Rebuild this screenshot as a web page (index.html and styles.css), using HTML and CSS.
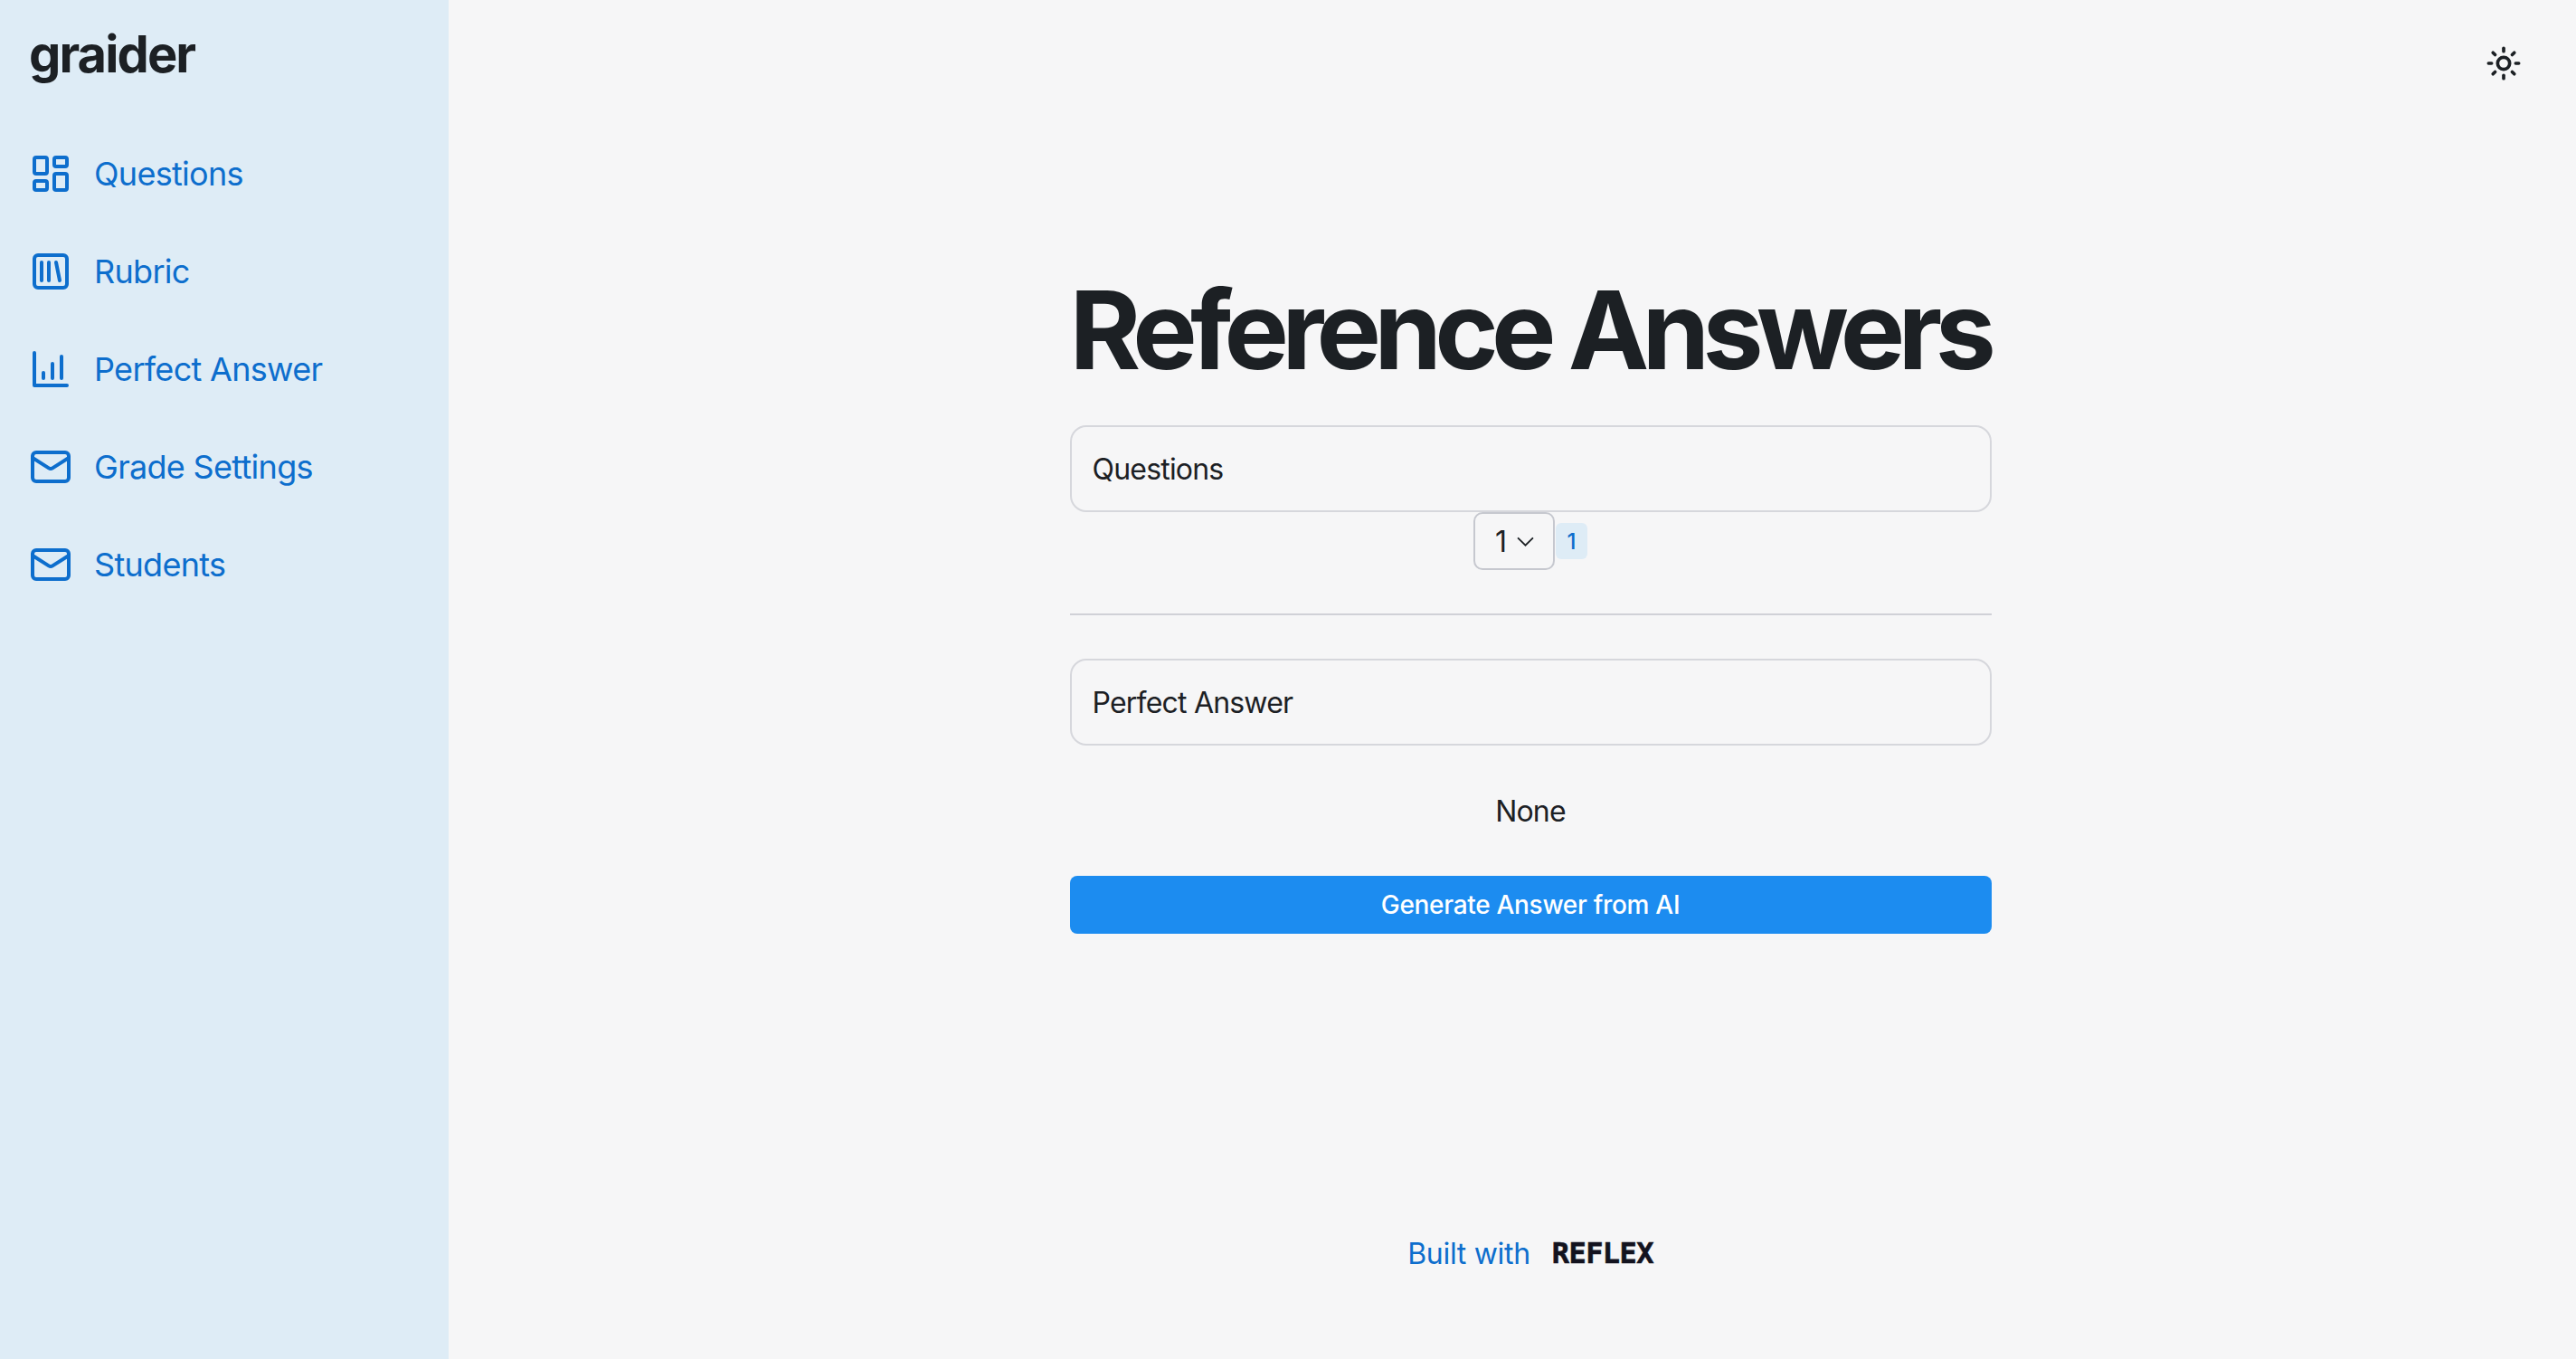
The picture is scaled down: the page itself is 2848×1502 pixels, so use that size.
FILE: index.html
```html
<!DOCTYPE html>
<html lang="en">
<head>
    <meta charset="UTF-8">
    <meta name="viewport" content="width=device-width, initial-scale=1.0">
    <title>graider</title>
    <link rel="stylesheet" href="styles.css">
</head>
<body>
    <div class="app">
        <aside class="sidebar">
            <div class="logo">graider</div>
            <nav class="nav">
                <a class="nav-item" href="#">
                    <svg class="nav-icon" viewBox="0 0 24 24"><rect x="3" y="3" width="7" height="9" rx="1"/><rect x="14" y="3" width="7" height="5" rx="1"/><rect x="14" y="12" width="7" height="9" rx="1"/><rect x="3" y="16" width="7" height="5" rx="1"/></svg>
                    <span>Questions</span>
                </a>
                <a class="nav-item" href="#">
                    <svg class="nav-icon" viewBox="0 0 24 24"><rect x="3" y="3" width="18" height="18" rx="2"/><path d="M7 7v10"/><path d="M11 7v10"/><path d="m15 7 2 10"/></svg>
                    <span>Rubric</span>
                </a>
                <a class="nav-item" href="#">
                    <svg class="nav-icon" viewBox="0 0 24 24"><path d="M3 3v18h18"/><path d="M13 17V9"/><path d="M18 17V5"/><path d="M8 17v-3"/></svg>
                    <span>Perfect Answer</span>
                </a>
                <a class="nav-item" href="#">
                    <svg class="nav-icon" viewBox="0 0 24 24"><rect x="2" y="4" width="20" height="16" rx="2"/><path d="m22 7-8.97 5.7a1.94 1.94 0 0 1-2.06 0L2 7"/></svg>
                    <span>Grade Settings</span>
                </a>
                <a class="nav-item" href="#">
                    <svg class="nav-icon" viewBox="0 0 24 24"><rect x="2" y="4" width="20" height="16" rx="2"/><path d="m22 7-8.97 5.7a1.94 1.94 0 0 1-2.06 0L2 7"/></svg>
                    <span>Students</span>
                </a>
            </nav>
        </aside>

        <main class="main">
            <div class="content">
                <h1 class="title">Reference Answers</h1>
                <input class="text-input" type="text" value="Questions">
                <div class="picker">
                    <button class="select-btn">
                        <span>1</span>
                        <svg class="chevron" viewBox="0 0 18 10"><path d="M1 1l8 8 8-8"/></svg>
                    </button>
                    <span class="badge">1</span>
                </div>
                <div class="divider"></div>
                <input class="text-input" type="text" value="Perfect Answer">
                <p class="answer">None</p>
                <button class="generate-btn">Generate Answer from AI</button>
            </div>
            <footer class="footer">
                <span>Built with</span>
                <span class="brand">REFLEX</span>
            </footer>
        </main>
    </div>

    <button class="theme-btn" aria-label="Toggle color mode">
        <svg viewBox="0 0 24 24"><circle cx="12" cy="12" r="4"/><path d="M12 2v2"/><path d="M12 20v2"/><path d="m4.93 4.93 1.41 1.41"/><path d="m17.66 17.66 1.41 1.41"/><path d="M2 12h2"/><path d="M20 12h2"/><path d="m6.34 17.66-1.41 1.41"/><path d="m19.07 4.93-1.41 1.41"/></svg>
    </button>
</body>
</html>
```

FILE: styles.css
```css
* {
    box-sizing: border-box;
}
body {
    margin: 0;
    font-family: 'Inter', 'Liberation Sans', sans-serif;
    background-color: #f6f6f7;
    color: #1c2024;
}
.app {
    display: flex;
    height: 1502px;
    overflow: hidden;
}
.sidebar {
    width: 496px;
    flex-shrink: 0;
    padding: 24px 32px;
    background-color: #deecf6;
}
.logo {
    font-size: 56px;
    line-height: 72px;
    font-weight: 700;
    letter-spacing: -1.9px;
    margin-bottom: 56px;
}
.nav {
    display: flex;
    flex-direction: column;
    gap: 28px;
}
.nav-item {
    display: flex;
    align-items: center;
    gap: 24px;
    height: 80px;
    color: #0d6ecd;
    font-size: 36px;
    letter-spacing: -0.7px;
    text-decoration: none;
}
.nav-icon {
    width: 48px;
    height: 48px;
    fill: none;
    stroke: currentColor;
    stroke-width: 2;
    stroke-linecap: round;
    stroke-linejoin: round;
}
.main {
    flex: 1;
    display: flex;
    flex-direction: column;
    align-items: center;
    padding: 305px 0 97px 40px;
}
.content {
    width: 1019px;
    display: flex;
    flex-direction: column;
}
.title {
    margin: 0 0 45px;
    font-size: 120px;
    line-height: 120px;
    font-weight: 700;
    letter-spacing: -7.7px;
    white-space: nowrap;
}
.text-input {
    width: 100%;
    height: 96px;
    padding: 0 23px;
    border: 2px solid #d6d7dc;
    border-radius: 18px;
    background: transparent;
    color: #1c2024;
    font-family: inherit;
    font-size: 32px;
    letter-spacing: -0.8px;
}
.picker {
    display: flex;
    justify-content: center;
    align-items: center;
}
.select-btn {
    display: flex;
    align-items: center;
    justify-content: space-between;
    width: 90px;
    height: 64px;
    padding: 0 21px 0 22px;
    border: 2px solid #c6c8cf;
    border-radius: 10px;
    background: transparent;
    color: #1c2024;
    font-family: inherit;
    font-size: 32px;
}
.chevron {
    width: 19px;
    height: 11px;
    fill: none;
    stroke: #1c2024;
    stroke-width: 1.7;
}
.badge {
    display: flex;
    align-items: center;
    justify-content: center;
    width: 35px;
    height: 40px;
    margin-left: 1px;
    border-radius: 6px;
    background-color: #deecf6;
    color: #0d6ecd;
    font-size: 24px;
    font-weight: 500;
}
.divider {
    height: 2px;
    margin: 48px 0;
    background-color: #d0d1d7;
}
.answer {
    margin: 0;
    padding: 53px 0 51px;
    font-size: 32px;
    line-height: 40px;
    letter-spacing: -0.8px;
    text-align: center;
}
.generate-btn {
    height: 64px;
    border: none;
    border-radius: 8px;
    background-color: #1c8cf0;
    color: #ffffff;
    font-family: inherit;
    font-size: 28px;
    font-weight: 500;
    letter-spacing: -0.3px;
}
.footer {
    display: flex;
    align-items: center;
    gap: 24px;
    margin-top: auto;
    height: 40px;
    color: #0d6ecd;
    font-size: 32px;
    letter-spacing: -0.3px;
}
.brand {
    color: #13131f;
    font-family: 'DejaVu Sans Mono', monospace;
    font-size: 32px;
    font-weight: 700;
    letter-spacing: -0.6px;
    -webkit-text-stroke: 0.6px #13131f;
}
.theme-btn {
    position: absolute;
    top: 50px;
    right: 60px;
    width: 40px;
    height: 40px;
    padding: 0;
    border: none;
    background: transparent;
}
.theme-btn svg {
    display: block;
    fill: none;
    stroke: #1c2024;
    stroke-width: 2.2;
    stroke-linecap: round;
    stroke-linejoin: round;
}
```
